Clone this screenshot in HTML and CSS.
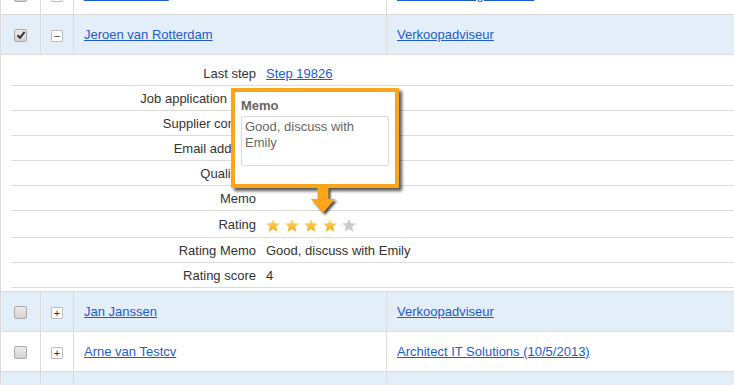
FILE: index.html
```html
<!DOCTYPE html>
<html lang="en">
<head>
  <meta charset="UTF-8" />
  <title>Candidates</title>
  <link rel="stylesheet" href="styles.css">
</head>
<body>
  <svg class="defs" width="0" height="0">
    <defs>
      <linearGradient id="gold" x1="0" y1="0" x2="0" y2="1">
        <stop offset="0" stop-color="#ffe27a"/>
        <stop offset="1" stop-color="#f3a40a"/>
      </linearGradient>
    </defs>
  </svg>

  <table class="list">
    <tr class="row">
      <td class="c-check"><span class="check"></span></td>
      <td class="c-toggle"><span class="toggle">+</span></td>
      <td class="c-name"><a href="#">Pieter de Vries</a></td>
      <td class="c-job"><a href="#">Accountmanager Noord</a></td>
    </tr>

    <!-- opened candidate -->
    <tr class="row alt">
      <td class="c-check"><span class="check on">
        <svg viewBox="0 0 10 10" width="10" height="10"><path d="M1.5 5.2 L4 7.8 L8.6 1.8" fill="none" stroke="#333" stroke-width="2"/></svg>
      </span></td>
      <td class="c-toggle"><span class="toggle">&minus;</span></td>
      <td class="c-name"><a href="#">Jeroen van Rotterdam</a></td>
      <td class="c-job"><a href="#">Verkoopadviseur</a></td>
    </tr>
    <tr class="detail-row">
      <td colspan="4">
        <div class="detail">
          <div class="field"><span class="label">Last step</span><span class="value"><a href="#">Step 19826</a></span></div>
          <div class="field"><span class="label">Job application date</span><span class="value">10-5-2013 14:35:21</span></div>
          <div class="field"><span class="label">Supplier contact</span><span class="value"></span></div>
          <div class="field"><span class="label">Email address</span><span class="value"></span></div>
          <div class="field"><span class="label">Quality %</span><span class="value"></span></div>
          <div class="field"><span class="label">Memo</span><span class="value"></span></div>
          <div class="field rating-field"><span class="label">Rating</span>
            <span class="value stars">
              <svg class="star" viewBox="0 0 14 13"><path d="M7 0 L8.9 4.2 L13.8 4.6 L10.1 7.8 L11.3 12.7 L7 10.1 L2.7 12.7 L3.9 7.8 L0.2 4.6 L5.1 4.2 Z"/></svg>
              <svg class="star" viewBox="0 0 14 13"><path d="M7 0 L8.9 4.2 L13.8 4.6 L10.1 7.8 L11.3 12.7 L7 10.1 L2.7 12.7 L3.9 7.8 L0.2 4.6 L5.1 4.2 Z"/></svg>
              <svg class="star" viewBox="0 0 14 13"><path d="M7 0 L8.9 4.2 L13.8 4.6 L10.1 7.8 L11.3 12.7 L7 10.1 L2.7 12.7 L3.9 7.8 L0.2 4.6 L5.1 4.2 Z"/></svg>
              <svg class="star" viewBox="0 0 14 13"><path d="M7 0 L8.9 4.2 L13.8 4.6 L10.1 7.8 L11.3 12.7 L7 10.1 L2.7 12.7 L3.9 7.8 L0.2 4.6 L5.1 4.2 Z"/></svg>
              <svg class="star off" viewBox="0 0 14 13"><path d="M7 0 L8.9 4.2 L13.8 4.6 L10.1 7.8 L11.3 12.7 L7 10.1 L2.7 12.7 L3.9 7.8 L0.2 4.6 L5.1 4.2 Z"/></svg>
            </span>
          </div>
          <div class="field"><span class="label">Rating Memo</span><span class="value">Good, discuss with Emily</span></div>
          <div class="field"><span class="label">Rating score</span><span class="value">4</span></div>

          <!-- memo callout -->
          <div class="callout">
            <div class="callout-title">Memo</div>
            <div class="callout-text">Good, discuss with Emily</div>
          </div>
          <svg class="callout-arrow" viewBox="0 0 26 28" width="26" height="28">
            <path d="M6.5 0 H17.5 V11 H24 L12 25 L0 11 H6.5 Z" fill="#fba51a"/>
          </svg>
        </div>
      </td>
    </tr>

    <tr class="row alt">
      <td class="c-check"><span class="check"></span></td>
      <td class="c-toggle"><span class="toggle">+</span></td>
      <td class="c-name"><a href="#">Jan Janssen</a></td>
      <td class="c-job"><a href="#">Verkoopadviseur</a></td>
    </tr>
    <tr class="row">
      <td class="c-check"><span class="check"></span></td>
      <td class="c-toggle"><span class="toggle">+</span></td>
      <td class="c-name"><a href="#">Arne van Testcv</a></td>
      <td class="c-job"><a href="#">Architect IT Solutions (10/5/2013)</a></td>
    </tr>
    <tr class="row alt">
      <td class="c-check"><span class="check"></span></td>
      <td class="c-toggle"><span class="toggle">+</span></td>
      <td class="c-name"><a href="#">Kees Bakker</a></td>
      <td class="c-job"><a href="#">Verkoopadviseur</a></td>
    </tr>
  </table>
</body>
</html>
```

FILE: styles.css
```css
body {
  margin: 0;
  font-family: "Liberation Sans", Arial, sans-serif;
  font-size: 13px;
  color: #333;
  background: #fff;
  overflow: hidden;
}
a {
  color: #1d5bd0;
  text-decoration: underline;
}
.defs {
  position: absolute;
}
.list {
  border-collapse: collapse;
  width: 100%;
  margin-top: -26px;
  table-layout: fixed;
}
.list td {
  border: 1px solid #dcdcdc;
  padding: 0 10px;
  height: 39px;
  vertical-align: middle;
}
.list td:last-child {
  border-right: none;
}
.row.alt td {
  background: #e4eef8;
}
.c-check {
  width: 19px;
  text-align: center;
}
.c-toggle {
  width: 12px;
  text-align: center;
}
.c-name {
  width: 292px;
}
.check {
  display: inline-block;
  width: 11px;
  height: 11px;
  border: 1px solid #a9a9a9;
  border-radius: 2px;
  background: linear-gradient(#ececec, #d2d2d2);
  vertical-align: middle;
  position: relative;
}
.check svg {
  position: absolute;
  left: 1px;
  top: 0;
}
.toggle {
  display: inline-block;
  width: 10px;
  height: 10px;
  border: 1px solid #bdbdbd;
  border-radius: 1px;
  background: #fff;
  font-size: 11px;
  line-height: 10px;
  text-align: center;
  color: #333;
  vertical-align: middle;
}
.list .detail-row td {
  padding: 0;
  height: auto;
  border-top: none;
}
.detail {
  position: relative;
  padding: 6px 0 3px 10px;
}
.field {
  display: grid;
  grid-template-columns: 245px 1fr;
  column-gap: 10px;
  height: 24px;
  align-items: center;
  border-bottom: 1px solid #dcdcdc;
}
.field.rating-field {
  height: 26px;
}
.label {
  text-align: right;
  white-space: nowrap;
}
.stars {
  display: flex;
  gap: 5px;
  padding-top: 2px;
}
.star {
  width: 14px;
  height: 13px;
  fill: url(#gold);
}
.star.off {
  fill: #cacaca;
}
.callout {
  position: absolute;
  left: 230px;
  top: 33px;
  width: 148px;
  height: 80px;
  border: 4px solid #fba51a;
  background: #fff;
  padding: 6px;
  box-shadow: 3px 3px 3px rgba(0, 0, 0, 0.65);
}
.callout-title {
  font-weight: bold;
  color: #666;
  line-height: 15px;
  margin-bottom: 3px;
}
.callout-text {
  border: 1px solid #dadada;
  border-radius: 2px;
  height: 44px;
  padding: 2px 3px;
  color: #666;
  line-height: 16px;
}
.callout-arrow {
  position: absolute;
  left: 310px;
  top: 133px;
  filter: drop-shadow(2px 2px 1px rgba(0, 0, 0, 0.7));
}
```
